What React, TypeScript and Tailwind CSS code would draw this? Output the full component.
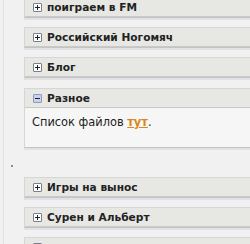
const blocks = [
  { title: "поиграем в FM" },
  { title: "Российский Ногомяч" },
  { title: "Блог" },
];

const bottomBlocks = [
  { title: "Игры на вынос" },
  { title: "Сурен и Альберт" },
  { title: "" },
];

function Toggle({ open }: { open?: boolean }) {
  return (
    <span
      className={
        "flex items-center justify-center w-[9px] h-[9px] border rounded-[1px] shrink-0 " +
        (open ? "border-[#8f9bbd] bg-[#c9d2ec]" : "border-[#7d7d8c] bg-white")
      }
    >
      <svg width="7" height="7" viewBox="0 0 7 7">
        <path d="M1 3.5h5" stroke="#222" strokeWidth="1" />
        {!open && <path d="M3.5 1v5" stroke="#222" strokeWidth="1" />}
      </svg>
    </span>
  );
}

function Header({ title, open }: { title: string; open?: boolean }) {
  return (
    <div className="flex items-center gap-[5px] h-[19px] pl-[8px] bg-[#e7e7e3] border-b border-[#c9c9c9]">
      <Toggle open={open} />
      <span className="text-[10.6px] font-bold text-[#222] leading-none pt-[1px]">{title}</span>
    </div>
  );
}

function Block({ title }: { title: string }) {
  return (
    <div className="w-[240px] border border-r-0 border-[#d6d6d6] border-b-[#c4c4c4] shadow-[0_2px_0_#e2e2e6]">
      <Header title={title} />
    </div>
  );
}

export default function App() {
  return (
    <div
      className="w-[250px] h-[244px] overflow-hidden bg-[#f1f1f1] flex"
      style={{ fontFamily: '"DejaVu Sans", Verdana, sans-serif' }}
    >
      <div className="w-[24px] shrink-0 pl-[3px]">
        <div className="h-full border-l border-[#e2e2e2] pt-[165px] pl-[7px]">
          <div className="w-[2px] h-[2px] bg-[#8a8a8a]" />
        </div>
      </div>
      <div className="flex-1 flex flex-col -mt-[3px] overflow-hidden">
        <div className="flex flex-col gap-[9px]">
          {blocks.map((b) => (
            <Block key={b.title} title={b.title} />
          ))}
        </div>
        <div className="mt-[10px] w-[240px] border border-r-0 border-[#d6d6d6] border-b-[#c4c4c4] shadow-[0_2px_0_#e2e2e6]">
          <Header title="Разное" open />
          <div className="h-[39px] bg-[#f6f6f6] pl-[7px] pt-[6px] text-[11.4px] text-[#222]">
            Список файлов{" "}
            <a href="#" className="font-bold text-[#d9861c] underline">
              тут
            </a>
            .
          </div>
        </div>
        <div className="mt-[29px] flex flex-col gap-[9px]">
          {bottomBlocks.map((b, i) => (
            <Block key={i} title={b.title} />
          ))}
        </div>
      </div>
    </div>
  );
}
